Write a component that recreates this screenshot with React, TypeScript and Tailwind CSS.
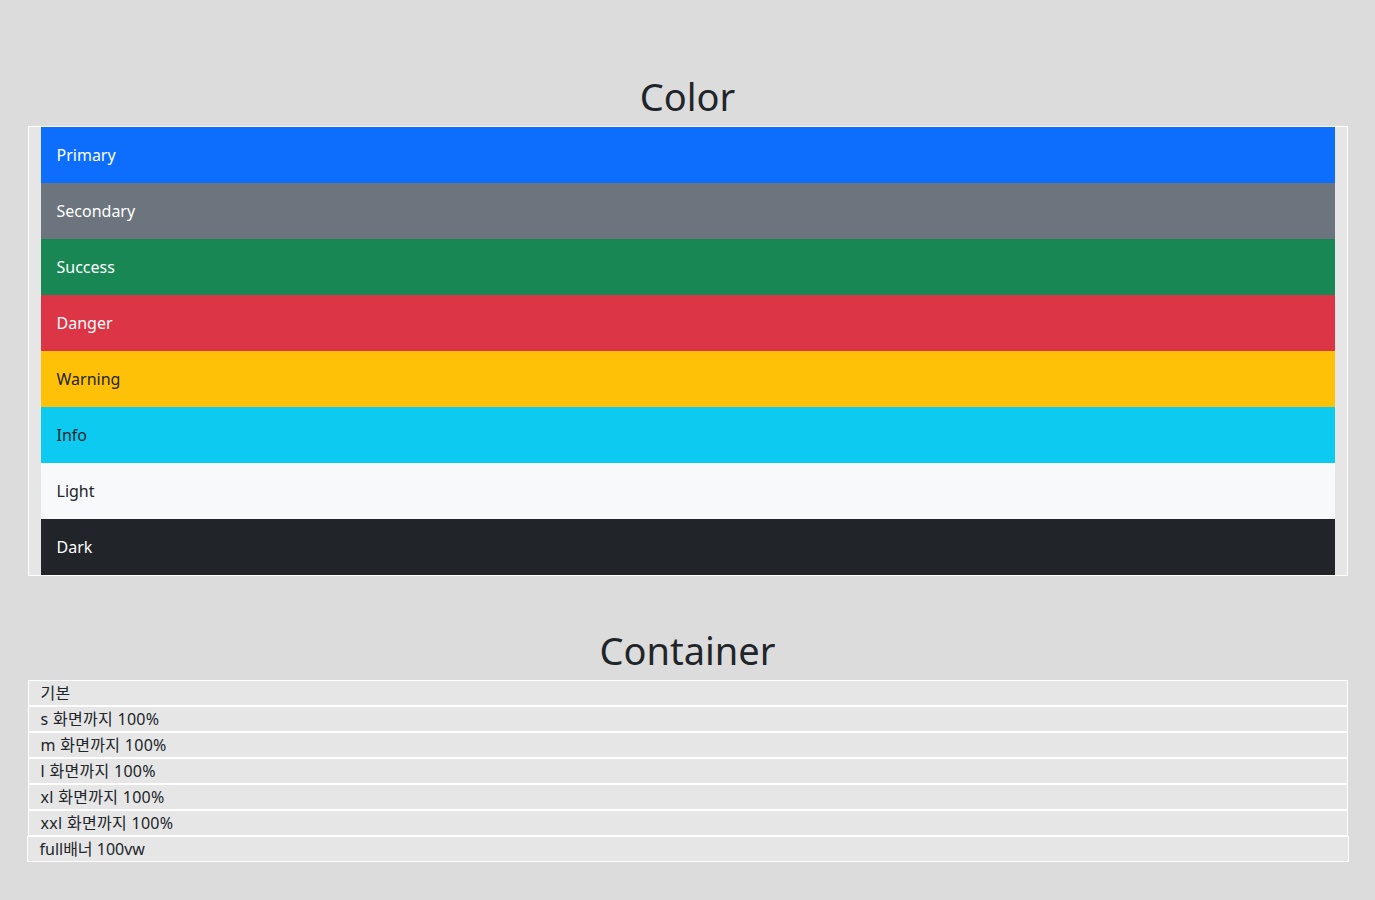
import React from 'react';

const colors = [
  { name: 'Primary', cls: 'bg-[#0d6efd] text-white' },
  { name: 'Secondary', cls: 'bg-[#6c757d] text-white' },
  { name: 'Success', cls: 'bg-[#198754] text-white' },
  { name: 'Danger', cls: 'bg-[#dc3545] text-white' },
  { name: 'Warning', cls: 'bg-[#ffc107] text-[#212529]' },
  { name: 'Info', cls: 'bg-[#0dcaf0] text-[#212529]' },
  { name: 'Light', cls: 'bg-[#f8f9fa] text-[#212529]' },
  { name: 'Dark', cls: 'bg-[#212529] text-white' },
];

const containers = ['기본', 's 화면까지 100%', 'm 화면까지 100%', 'l 화면까지 100%', 'xl 화면까지 100%', 'xxl 화면까지 100%'];

const App: React.FC = () => {
  return (
    <div
      className="min-h-[900px] bg-[#dcdcdc] pt-[70px] text-[16px] leading-[24px] text-[#212529]"
      style={{ fontFamily: '"Noto Sans", "Noto Sans CJK KR", sans-serif' }}
    >
      <h1 className="mb-2 pt-1 text-center text-[38px] leading-[44px] font-normal">Color</h1>
      <div className="mx-auto w-[1320px] border border-white bg-[#e6e6e6] px-3">
        {colors.map(c => (
          <div key={c.name} className={`h-14 flex items-center px-4 ${c.cls}`}>
            {c.name}
          </div>
        ))}
      </div>

      <h1 className="mt-12 mb-2 pt-1 text-center text-[38px] leading-[44px] font-normal">Container</h1>
      {containers.map(t => (
        <div key={t} className="mx-auto w-[1320px] border border-white bg-[#e6e6e6] px-3 tracking-[0.3px]">
          {t}
        </div>
      ))}
      <div className="mx-auto w-[1322px] border border-white bg-[#e6e6e6] px-3">full배너 100vw</div>
    </div>
  );
};

export default App;
